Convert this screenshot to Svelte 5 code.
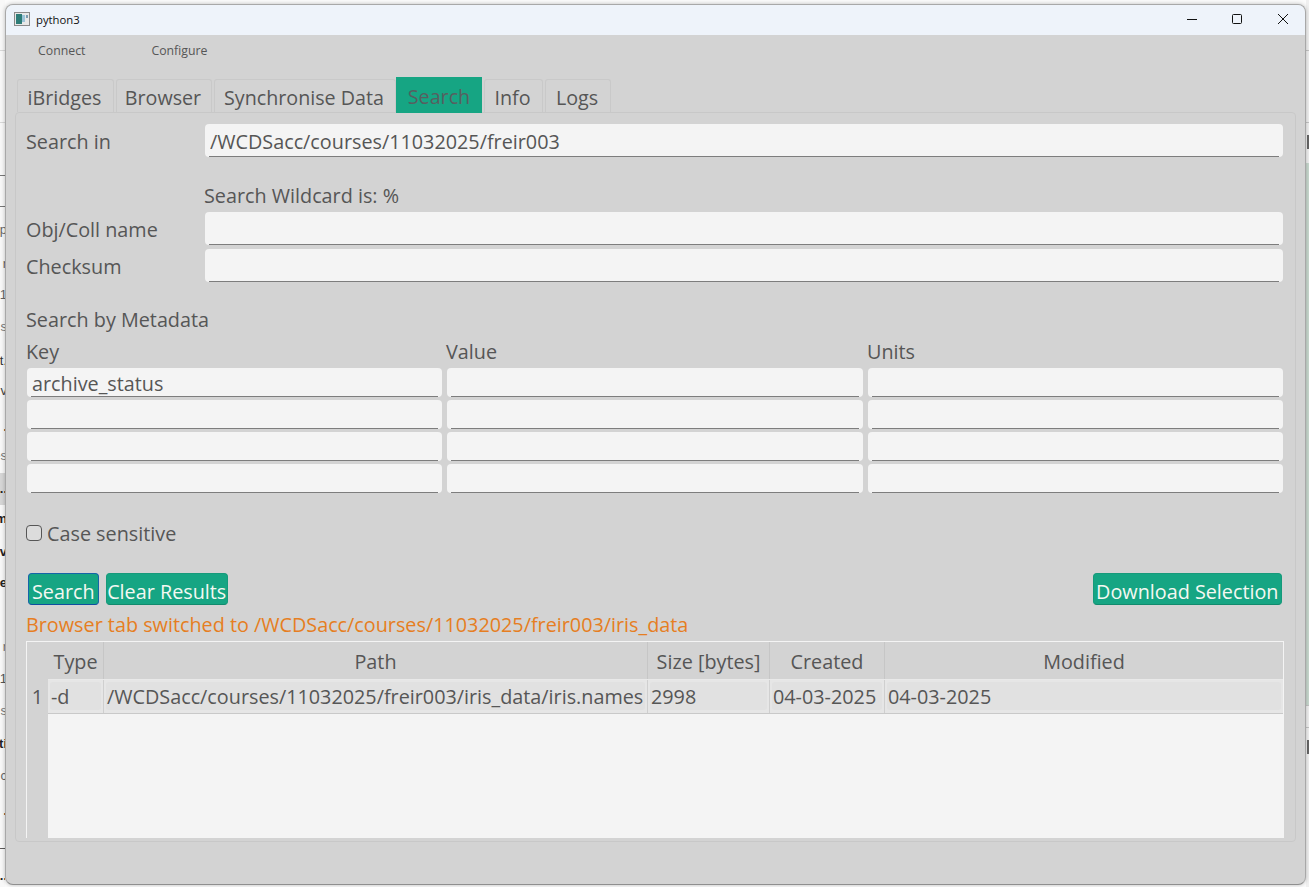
<script>
  const tabs = ['iBridges', 'Browser', 'Synchronise Data', 'Search', 'Info', 'Logs'];
  const metaRows = ['archive_status', '', '', ''];
  const frags = [
    ['p', 231, '#666', 400], ['r', 265, '#666', 400], ['1', 296, '#666', 400], ['s', 328, '#777', 400], ['t.', 362, '#333', 400],
    ['v', 392, '#444', 400], ['.', 428, '#222', 700], ['es', 457, '#777', 400], ['..', 490, '#222', 700], ['m', 520, '#222', 700],
    ['v', 553, '#222', 700], ['e', 584, '#222', 700], ['r', 648, '#777', 400], ['1', 680, '#555', 400], ['s', 712, '#777', 400],
    ['ti', 745, '#222', 700], ['c', 777, '#666', 400], ['.', 812, '#222', 700], ['_', 843, '#444', 400], ['..', 877, '#222', 700]
  ];
</script>

<div class="desktop">
  <div class="behind-left">
    <i class="rule" style="top:50px"></i>
    <i class="rule" style="top:122px"></i>
    <i class="rule dark" style="top:175px"></i>
    <i class="rule dark" style="top:206px"></i>
    <i class="band"></i>
    {#each frags as f}
      <span class="frag" style="top:{f[1] - 8}px;color:{f[2]};font-weight:{f[3]}">{f[0]}</span>
    {/each}
  </div>
  <div class="behind-right">
    <i class="green"></i>
    <i class="line" style="top:50px"></i>
    <i class="line" style="top:122px"></i>
    <i class="line" style="top:705px"></i>
    <i class="line" style="top:727px"></i>
    <i class="mark" style="top:135px"></i>
    <i class="mark" style="top:740px"></i>
  </div>

  <div class="window">
    <header class="titlebar">
      <svg class="appicon" width="16" height="14" viewBox="0 0 16 14">
        <rect x="0.5" y="0.5" width="15" height="13" fill="#e8e8e8" stroke="#8a8a8a"/>
        <rect x="2" y="2" width="6" height="10" fill="#2e7d78"/>
        <rect x="8" y="3" width="3" height="7" fill="#9cc4d8"/>
        <rect x="12" y="3" width="2" height="3" fill="#7a9cb0"/>
      </svg>
      <span class="title">python3</span>
      <div class="controls">
        <svg width="12" height="12" viewBox="0 0 12 12"><path d="M1 6.5h10" stroke="#111" fill="none"/></svg>
        <svg width="12" height="12" viewBox="0 0 12 12"><rect x="1.5" y="1.5" width="9" height="9" rx="1" stroke="#111" fill="none"/></svg>
        <svg width="12" height="12" viewBox="0 0 12 12"><path d="M1 1l10 10M11 1L1 11" stroke="#111" fill="none"/></svg>
      </div>
    </header>

    <nav class="menu"><span>Connect</span><span>Configure</span></nav>

    <div class="tabs">
      {#each tabs as t, i}
        <div class="tab t{i}" class:active={t === 'Search'}>{t}</div>
      {/each}
    </div>

    <section class="panel">
      <div class="row first">
        <label class="lab" for="sin">Search in</label>
        <input id="sin" class="field tall" value="/WCDSacc/courses/11032025/freir003" />
      </div>
      <div class="hint">Search Wildcard is: %</div>
      <div class="row">
        <label class="lab" for="obj">Obj/Coll name</label>
        <input id="obj" class="field tall" />
      </div>
      <div class="row gap4">
        <label class="lab" for="chk">Checksum</label>
        <input id="chk" class="field tall" />
      </div>

      <div class="meta-title">Search by Metadata</div>
      <div class="meta">
        <div class="mh">Key</div><div class="mh">Value</div><div class="mh">Units</div>
        {#each metaRows as v}
          <input class="field" value={v} aria-label="Key" />
          <input class="field" aria-label="Value" />
          <input class="field" aria-label="Units" />
        {/each}
      </div>

      <label class="check"><span class="box"></span>Case sensitive</label>

      <div class="actions">
        <button class="btn focus">Search</button>
        <button class="btn">Clear Results</button>
        <button class="btn push">Download Selection</button>
      </div>

      <div class="msg">Browser tab switched to /WCDSacc/courses/11032025/freir003/iris_data</div>

      <div class="table">
        <div class="thead">
          <div class="corner"></div>
          <div class="th c1">Type</div>
          <div class="th c2">Path</div>
          <div class="th c3">Size [bytes]</div>
          <div class="th c4">Created</div>
          <div class="th c5">Modified</div>
        </div>
        <div class="tbody">
          <div class="rh">1</div>
          <div class="rows">
            <div class="tr">
              <div class="td c1"><span>-d</span></div>
              <div class="td c2"><span>/WCDSacc/courses/11032025/freir003/iris_data/iris.names</span></div>
              <div class="td c3"><span>2998</span></div>
              <div class="td c4"><span>04-03-2025</span></div>
              <div class="td c5"><span>04-03-2025</span></div>
            </div>
          </div>
        </div>
      </div>
    </section>
  </div>
</div>

<style>
  :global(body) { margin: 0; background: #fff; }
  .desktop {
    position: relative; width: 1309px; height: 887px; overflow: hidden; background: #fbfbfb;
    font-family: "Open Sans", "Noto Sans", sans-serif;
  }
  .behind-left { position: absolute; left: 0; top: 0; width: 5px; height: 887px; overflow: hidden; background: #f8f8f8; }
  .rule { position: absolute; left: 0; width: 6px; height: 1px; background: #d8d8d8; }
  .rule.dark { background: #777; }
  .band { position: absolute; left: 0; top: 473px; width: 6px; height: 32px; background: #d6d6d6; }
  .frag { position: absolute; right: -2px; font: 13px "Liberation Sans", sans-serif; line-height: 14px; }
  .behind-right { position: absolute; right: 0; top: 0; width: 3px; height: 887px; background: #f0f0f0; }
  .green { position: absolute; left: 0; top: 163px; width: 3px; height: 542px; background: #c9d9cf; }
  .line { position: absolute; left: 0; width: 3px; height: 1px; background: #c4c4c4; }
  .mark { position: absolute; left: 1px; width: 2px; height: 14px; background: #666; }

  .window {
    position: absolute; left: 5px; top: 4px; width: 1301px; height: 881px; box-sizing: border-box;
    border: 1px solid #a8a8a8; border-bottom-color: #8f8f8f; border-radius: 8px; overflow: hidden;
    background: #d3d3d3; display: flex; flex-direction: column; color: #565656;
    box-shadow: 0 0 4px rgba(0,0,0,.25);
  }
  .titlebar {
    height: 30px; box-sizing: border-box; padding: 0 0 2px 8px; flex: none; background: #eef3fa; display: flex; align-items: center; color: #111;
  }
  .appicon { margin-right: 6px; }
  .title { font: 11.3px "Open Sans", sans-serif; }
  .controls { margin-left: auto; display: flex; gap: 33px; padding-right: 16px; }
  .controls svg:last-child { margin-left: 1px; }
  .menu { height: 31px; flex: none; display: flex; align-items: center; padding-left: 32px; gap: 66px; font-size: 12.3px; }
  .tabs { display: flex; flex: none; padding: 11px 0 0 11px; height: 35px; align-items: flex-end; }
  .tab {
    height: 33px; box-sizing: border-box; border: 1px solid #c9c9c9; border-bottom: none; border-radius: 3px 3px 0 0;
    margin-right: 2px; padding: 0 2px 0 0; text-align: center; font-size: 19.7px; line-height: 36px; white-space: nowrap; flex: none;
  }
  .t0 { width: 97px; }
  .t1 { width: 96px; }
  .t2 { width: 182px; margin-right: 0; }
  .t3 { width: 86px; }
  .t4 { width: 59px; }
  .t5 { width: 66px; }
  .tab.active {
    height: 36px; background: #16a583; border: none; border-radius: 0; margin: 0 2px -1px 0; padding: 0; line-height: 40px; color: #565f60;
    position: relative; z-index: 1;
  }
  .panel {
    margin: 0 9px 0 9px; width: 1281px; box-sizing: border-box; height: 730px; flex: none;
    border: 1px solid #c8c8c8; border-radius: 4px; padding: 0 11px 0 10px; overflow: hidden;
    font-size: 19.8px;
  }
  .row { display: grid; grid-template-columns: 179px 1078px; align-items: center; height: 33px; }
  .row.first { margin-top: 11px; }
  .row.gap4 { margin-top: 4px; }
  .lab { line-height: 33px; height: 33px; padding-top: 1px; box-sizing: border-box; }
  .field {
    box-sizing: border-box; height: 29px; width: 100%; min-width: 0; border: none; border-radius: 4px; outline: none;
    background: linear-gradient(#7d7d7d, #7d7d7d) center bottom / calc(100% - 8px) 1px no-repeat, #f4f4f4;
    padding: 2px 5px 0; font: inherit; color: #565656; margin: 0;
  }
  .tall { height: 33px; }
  .hint { margin: 24px 0 0 178px; line-height: 30px; height: 31px; }
  .meta-title { margin-top: 23px; line-height: 30px; height: 30px; }
  .meta { display: grid; grid-template-columns: 415px 416px 415px; column-gap: 5px; row-gap: 3px; margin-left: 1px; margin-top: 2px; }
  .mh { height: 29px; line-height: 29px; margin-left: -1px; margin-bottom: -1px; }
  .check { display: flex; align-items: center; margin-top: 25px; height: 30px; }
  .box { width: 14px; height: 14px; border: 1px solid #565656; border-radius: 4px; background: #dcdcdc; margin-right: 5px; flex: none; }
  .actions { display: flex; gap: 7px; margin: 25px 0 0 2px; width: 1254px; }
  .btn {
    height: 32px; box-sizing: border-box; border: 1px solid #169a7b; border-bottom-color: #118a6d; border-radius: 4px; background: #16a583; color: #f4f8f2;
    font: inherit; padding: 4px 0.5px 0; line-height: 28px; white-space: nowrap;
  }
  .btn.focus { border-color: #1565a8; border-bottom-color: #0f4fa0; padding: 4px 3px 0; }
  .push { margin-left: auto; padding: 4px 2.5px 0; }
  .msg { color: #e67e22; line-height: 30px; height: 30px; margin-top: 5px; white-space: nowrap; }
  .table {
    margin-top: 1px; box-sizing: border-box; width: 1258px; height: 197px; border: 1px solid #f4f4f4; border-bottom: none; background: #d3d3d3; overflow: hidden;
  }
  .thead { display: flex; height: 37px; }
  .corner { width: 21px; flex: none; }
  .th { text-align: center; line-height: 39px; box-sizing: border-box; border-right: 1px solid #c6c6c6; flex: none; }
  .c1 { width: 56px; }
  .c2 { width: 544px; }
  .c3 { width: 122px; }
  .c4 { width: 115px; }
  .c5 { width: 398px; border-right: none; }
  .tbody { display: flex; height: 159px; }
  .rh { width: 21px; flex: none; text-align: center; line-height: 36px; padding-left: 0; }
  .rows { flex: 1; background: #f4f4f4; }
  .tr { display: flex; height: 35px; box-sizing: border-box; background: #e6e6e6; border-top: 1px solid #e9e9e9; border-bottom: 1px solid #c9c9c9; }
  .td { box-sizing: border-box; border-right: 1px solid #cfcfcf; padding: 2px; flex: none; overflow: hidden; }
  .td span { display: block; height: 28px; padding: 0 1px; background: #e1e1e1; border-radius: 3px; line-height: 30px; white-space: nowrap; }
  .td.c5 { border-right: none; }
</style>
